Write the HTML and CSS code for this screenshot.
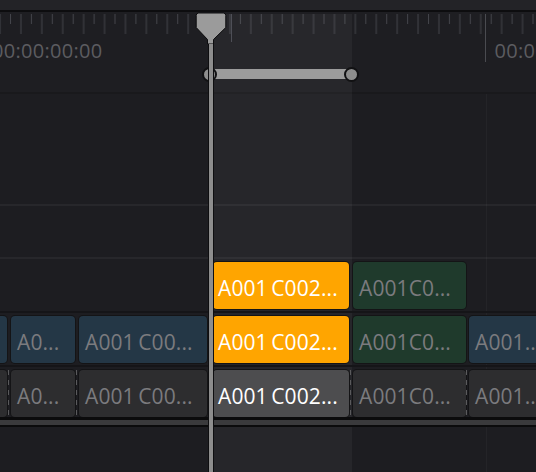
FILE: index.html
```html
<!DOCTYPE html>
<html>
<head>
<meta charset="utf-8">
<link rel="stylesheet" href="styles.css">
</head>
<body>
<div class="timeline">
  <div class="topband"></div>
  <div class="ruler">
    <svg class="ticks" width="536" height="60" viewBox="0 0 536 60">
      <defs>
        <pattern id="tk" x="10" y="0" width="20.9" height="60" patternUnits="userSpaceOnUse">
          <rect x="0" y="2" width="1" height="10" fill="#43444a"/>
          <rect x="10.45" y="2" width="1" height="20" fill="#43444a"/>
        </pattern>
      </defs>
      <rect x="0" y="0" width="536" height="60" fill="url(#tk)"/>
      <rect x="231" y="2" width="1" height="28" fill="#474850"/>
      <rect x="485" y="2" width="1" height="48" fill="#4a4b50"/>
    </svg>
    <div class="tc-row">
      <span class="tc tc-left">00:00:00:00</span>
      <span class="tc tc-right">00:00:00:00</span>
    </div>
  </div>
  <div class="track empty tall"></div>
  <div class="track empty"></div>
  <div class="track clips">
    <div class="clip orange" style="margin-left:213px;width:136px">A001 C002...</div>
    <div class="clip green" style="margin-left:4px;width:113px">A001C0...</div>
  </div>
  <div class="track clips">
    <div class="clip blue" style="margin-left:-10px;width:17px"></div>
    <div class="clip blue" style="margin-left:4px;width:64px">A0...</div>
    <div class="clip blue" style="margin-left:4px;width:128px">A001 C00...</div>
    <div class="clip orange" style="margin-left:6px;width:136px">A001 C002...</div>
    <div class="clip green" style="margin-left:4px;width:113px">A001C0...</div>
    <div class="clip blue" style="margin-left:3px;width:80px">A001...</div>
  </div>
  <div class="track clips audio">
    <div class="clip gray" style="margin-left:-10px;width:17px"></div>
    <div class="clip gray join" style="margin-left:4px;width:64px">A0...</div>
    <div class="clip gray join" style="margin-left:4px;width:128px">A001 C00...</div>
    <div class="clip sel" style="margin-left:6px;width:136px">A001 C002...</div>
    <div class="clip gray join" style="margin-left:4px;width:113px">A001C0...</div>
    <div class="clip gray join" style="margin-left:3px;width:80px">A001...</div>
  </div>
  <div class="endlines"></div>
  <div class="track bottom"></div>

  <div class="range-col"></div>
  <div class="grid-line"></div>
  <div class="range-bar"></div>
  <div class="knob knob-l"></div>
  <div class="knob knob-r"></div>
  <div class="playhead-line"></div>
  <svg class="playhead-head" width="32" height="32" viewBox="0 0 32 32">
    <path d="M1.2 3.5 Q1.2 1 3.7 1 L28.3 1 Q30.8 1 30.8 3.5 L30.8 15.5 L18.5 27.5 L18.5 32 L12.5 32 L12.5 27.5 L1.2 15.5 Z" fill="#9b9b9b" stroke="#0c0c0e" stroke-width="1"/>
  </svg>
</div>
</body>
</html>
```
FILE: styles.css
```css
* { box-sizing: border-box; }
html, body { margin: 0; padding: 0; background: #1d1d21; }
body { font-family: "Open Sans", "Noto Sans", sans-serif; }

.timeline {
  position: relative;
  width: 536px;
  height: 472px;
  overflow: hidden;
  background: #1d1d21;
}

.topband {
  height: 12px;
  background: #232327;
  border-bottom: 2px solid #0d0d0f;
}

.ruler {
  position: relative;
  height: 82px;
  background: #1e1e22;
  border-bottom: 2px solid #19191c;
}
.ticks { position: absolute; left: 0; top: 0; display: block; }

.tc-row {
  display: flex;
  padding-top: 25px;
  height: 56px;
}
.tc {
  font-size: 20px;
  line-height: 27px;
  letter-spacing: 0.3px;
  color: #5c5c60;
  white-space: nowrap;
}
.tc-left { margin-left: -8px; }
.tc-right { margin-left: 392px; }

.track {
  position: relative;
  border-bottom: 2px solid #27272b;
}
.track.empty { height: 53px; }
.track.empty.tall { height: 112px; }

.track.clips {
  display: flex;
  height: 54px;
  padding-top: 3px;
  border-bottom: 2px solid #151518;
  z-index: 2;
}
.track.audio {
  height: 50px;
  border-bottom: none;
}

.clip {
  position: relative;
  flex: none;
  height: 47px;
  border-radius: 4px;
  box-shadow: 0 0 0 1px #141416;
  padding: 13px 0 0 6px;
  font-size: 21px;
  line-height: 27px;
  letter-spacing: 0.1px;
  word-spacing: -2px;
  white-space: nowrap;
  overflow: hidden;
  color: #7b7b7e;
}
.clip.blue { background: #243746; }
.clip.green { background: #1f3a2c; }
.clip.orange { background: #ffa500; color: #ffffff; padding-left: 5px; }
.clip.gray { background: #2d2d2f; }
.clip.sel { background: #4d4d4f; color: #ffffff; padding-left: 5px; }

.clip.join::before {
  content: "";
  position: absolute;
  left: -3px;
  top: 0;
  width: 1px;
  height: 47px;
  background: repeating-linear-gradient(to bottom, #5a5a5c 0 5px, transparent 5px 10px);
}
.track.audio .clip { overflow: visible; }

.endlines {
  height: 10px;
  background: #3a3a3c;
  border-top: 3px solid #0b0b0c;
  border-bottom: 2px solid #0b0b0c;
  position: relative;
  z-index: 2;
}
.track.bottom { height: 60px; border-bottom: none; }

.range-col {
  position: absolute;
  left: 210px;
  top: 14px;
  width: 142px;
  bottom: 0;
  background: rgba(255, 255, 255, 0.045);
  z-index: 1;
  pointer-events: none;
}
.grid-line {
  position: absolute;
  left: 486px;
  top: 94px;
  width: 1px;
  bottom: 0;
  background: rgba(255, 255, 255, 0.035);
  z-index: 1;
}

.range-bar {
  position: absolute;
  left: 210px;
  top: 69px;
  width: 141px;
  height: 10px;
  background: #9c9c9c;
  z-index: 3;
}
.knob {
  position: absolute;
  top: 67px;
  width: 15px;
  height: 15px;
  border-radius: 50%;
  border: 2px solid #111113;
  background: #8e8e8e;
  z-index: 3;
}
.knob-l { left: 202px; }
.knob-r { left: 344px; }

.playhead-line {
  position: absolute;
  left: 207.5px;
  top: 38px;
  width: 6px;
  bottom: 0;
  background: #8d8d8d;
  border-left: 1px solid #0e0e10;
  border-right: 1px solid #0e0e10;
  z-index: 4;
}
.playhead-head {
  position: absolute;
  left: 195px;
  top: 12px;
  display: block;
  z-index: 5;
}
```
